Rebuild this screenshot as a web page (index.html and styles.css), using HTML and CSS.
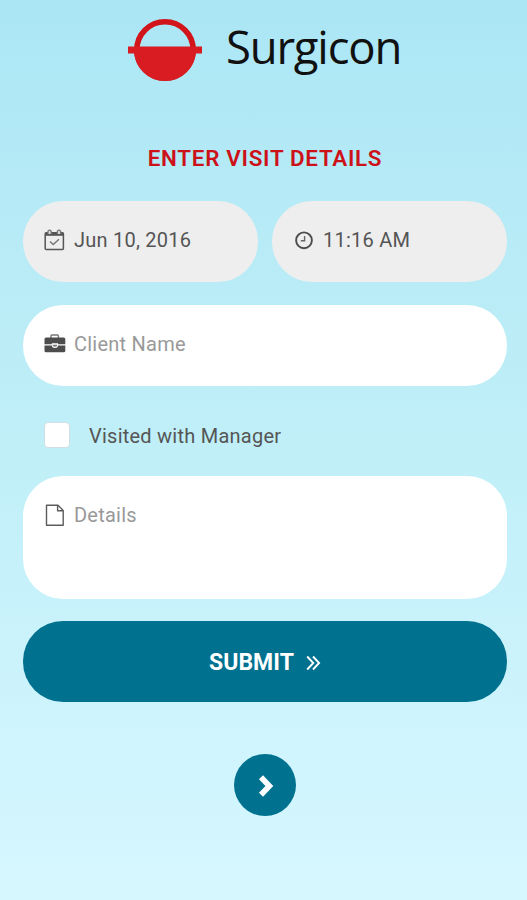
FILE: index.html
```html
<!DOCTYPE html>
<html lang="en">
<head>
<meta charset="utf-8">
<title>Surgicon</title>
<link rel="stylesheet" href="styles.css">
</head>
<body>
<main class="screen">
  <header class="brand">
    <svg class="brand-mark" width="74" height="64" viewBox="0 0 74 64">
      <circle cx="37" cy="32" r="28.2" fill="none" stroke="#d2151b" stroke-width="5.6"/>
      <path d="M0 28.5H74V35.5H67.8A31 31 0 0 1 6.2 35.5H0Z" fill="#d91b22"/>
    </svg>
    <span class="brand-name">Surgicon</span>
  </header>
  <h1 class="title">ENTER VISIT DETAILS</h1>
  <form class="form">
    <div class="row">
      <div class="field readonly">
        <svg class="icon" width="22" height="24" viewBox="0 0 22 24" fill="none" stroke="#555" stroke-width="1.5">
          <rect x="1.2" y="4.8" width="18.2" height="16.7" rx="1"/>
          <path d="M1.5 6.3H19.2" stroke-width="3"/>
          <path d="M4 6V3.2Q5.6 1.2 7.2 3.2V6M13.4 6V3.2Q15 1.2 16.6 3.2V6" stroke-width="1.3" stroke="#777" fill="#ddd"/>
          <path d="M6 13.5L9.2 16.5L15 11.2" stroke="#777"/>
        </svg>
        <span class="text date">Jun 10, 2016</span>
      </div>
      <div class="field readonly">
        <svg class="icon" width="22" height="24" viewBox="0 0 22 24" fill="none" stroke="#4c4c4c">
          <circle cx="11" cy="12.3" r="7.9" stroke-width="1.9"/>
          <path d="M11.6 8V12.7H7.8" stroke-width="1.4" stroke="#666"/>
        </svg>
        <span class="text time">11:16 AM</span>
      </div>
    </div>
    <div class="field client">
      <svg class="icon" width="22" height="24" viewBox="0 0 22 24">
        <path d="M7 6V3.8Q7 3 7.8 3H13.6Q14.4 3 14.4 3.8V6" fill="none" stroke="#777" stroke-width="1.4"/>
        <path d="M2 5.6H19.8Q21.3 5.6 21.3 7.2V12.2H14V11.3H7.8V12.2H.5V7.2Q.5 5.6 2 5.6Z" fill="#4d4d4d"/>
        <path d="M.5 13.5H7.8Q8 16 10.9 16Q13.8 16 14 13.5H21.3V18.7Q21.3 20.2 19.8 20.2H2Q.5 20.2 .5 18.7Z" fill="#4d4d4d"/>
        <path d="M8.8 12.7H13V14Q10.9 15.5 8.8 14Z" fill="#777"/>
      </svg>
      <span class="text placeholder name">Client Name</span>
    </div>
    <label class="check"><span class="box"></span><span class="text check-text">Visited with Manager</span></label>
    <div class="field area">
      <svg class="icon" width="22" height="24" viewBox="0 0 22 24" fill="none" stroke="#5c5c5c" stroke-width="1.4" stroke-linejoin="round">
        <path d="M2.5 2.2H14L19.2 7.4V22.2H2.5Z"/>
        <path d="M13.6 2.5V7.8H19"/>
      </svg>
      <span class="text placeholder details">Details</span>
    </div>
    <button class="submit" type="button"><span>SUBMIT</span>
      <svg width="15" height="16" viewBox="0 0 15 16" fill="none" stroke="#fff" stroke-width="1.9"><path d="M1.2 1.5L7.3 8L1.2 14.5M7 1.5L13.1 8L7 14.5"/></svg>
    </button>
  </form>
  <button class="next" type="button" aria-label="Next">
    <svg width="16" height="24" viewBox="0 0 16 24" fill="none" stroke="#fff" stroke-width="5.6"><path d="M3 3.2L11.4 12L3 20.8"/></svg>
  </button>
</main>
</body>
</html>
```
FILE: styles.css
```css
* { box-sizing: border-box; }
body { margin: 0; font-family: Roboto, sans-serif; }
.screen {
  height: 900px;
  overflow: hidden;
  padding: 18px 20px 0 23px;
  background: linear-gradient(#abe6f5 0%, #b5eaf6 20%, #c0eff8 50%, #cef4fd 80%, #d6f7fe 100%);
}
.brand { display: flex; align-items: center; height: 64px; padding-left: 105px; }
.brand-name {
  margin-left: 24px;
  padding-bottom: 7px;
  font: 45.5px/57px "Open Sans", sans-serif;
  letter-spacing: -1.2px;
  color: #111;
  white-space: nowrap;
}
.brand-mark { flex: none; }
.title {
  margin: 62px 0 0;
  height: 28px;
  font-size: 22.4px;
  line-height: 29px;
  font-weight: 600;
  letter-spacing: 0.7px;
  color: #cc1218;
  text-align: center;
  white-space: nowrap;
}
.form { margin-top: 29px; }
.row { display: grid; grid-template-columns: 1fr 1fr; gap: 14px; }
.field {
  display: flex;
  align-items: flex-start;
  height: 81px;
  padding: 27px 21px 0;
  border-radius: 40px;
  background: #fff;
}
.readonly { background: #eee; }
.icon { flex: none; margin-right: 8px; }
.text { font-size: 20px; line-height: 24px; letter-spacing: 0.24px; color: #555; white-space: nowrap; }
.placeholder { color: #999; }
.client { margin-top: 23px; }
.check { display: flex; align-items: center; height: 26px; margin: 36px 0 28px 21px; }
.box { width: 26px; height: 26px; border: 1.5px solid #d2dfe2; border-radius: 4px; background: #fff; }
.check-text { margin-left: 19px; padding-top: 2px; }
.area { height: 123px; }
.submit {
  display: flex;
  align-items: center;
  justify-content: center;
  gap: 12px;
  width: 100%;
  height: 81px;
  margin-top: 22px;
  padding: 2px 0 0;
  border: 0;
  border-radius: 40px;
  background: #00718f;
  color: #fff;
  font: 700 23px Roboto, sans-serif;
}
.next {
  display: flex;
  align-items: center;
  justify-content: center;
  width: 62px;
  height: 62px;
  margin: 52px auto 0;
  padding: 2px 0 0 2px;
  border: 0;
  border-radius: 50%;
  background: #00718f;
}
```
